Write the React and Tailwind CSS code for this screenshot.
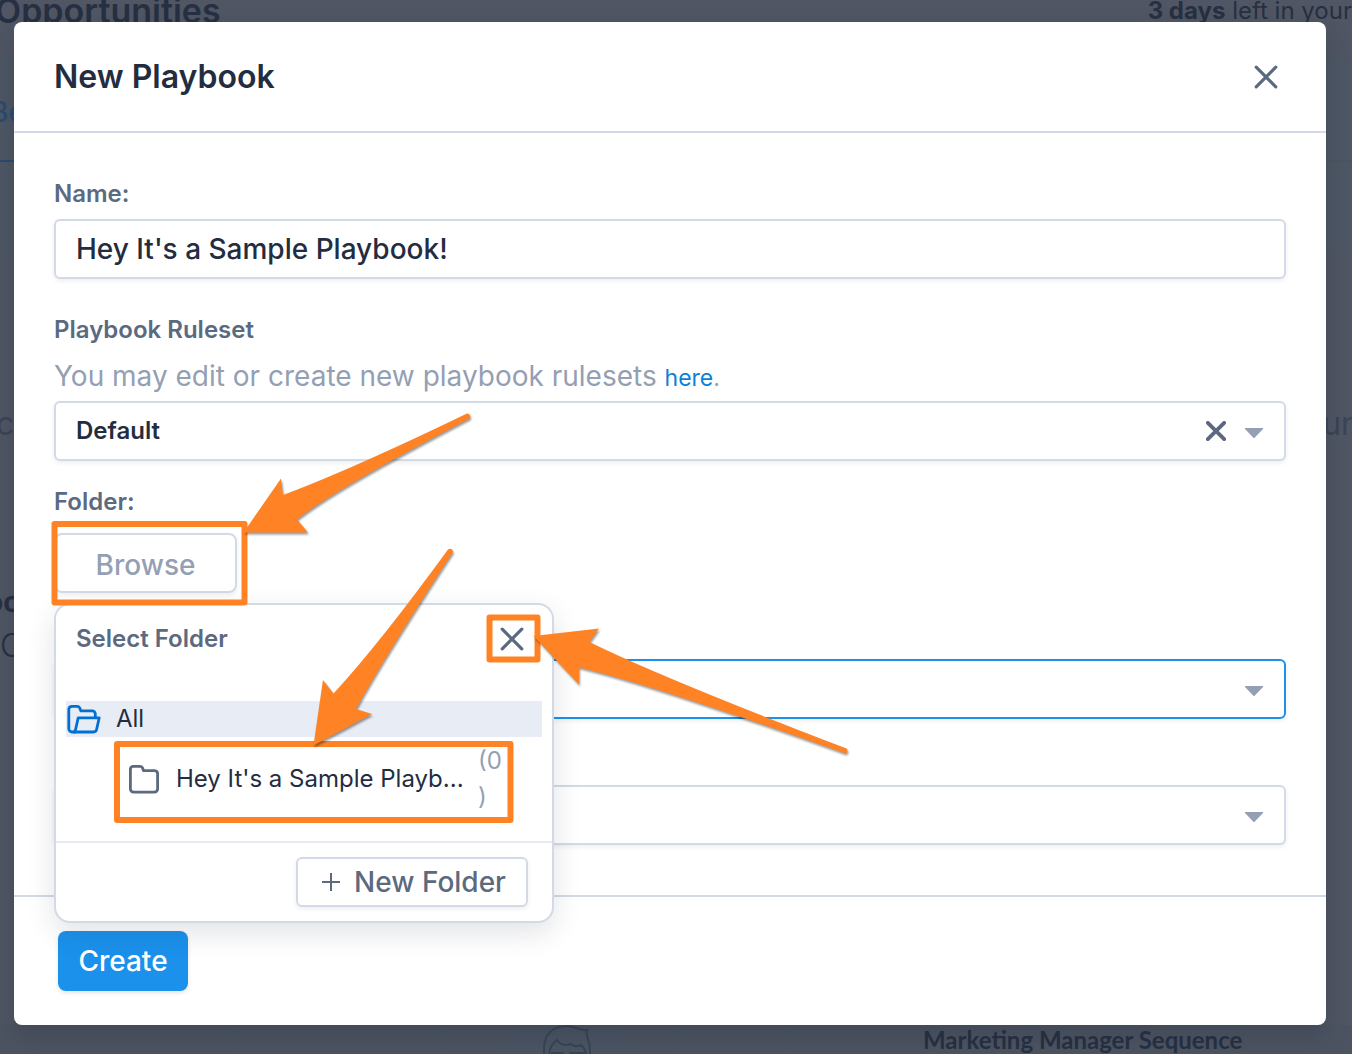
import React from "react";

const fieldBox = "h-[60px] w-full rounded-md border-2 bg-white shadow-[0_2px_4px_rgba(30,41,59,0.08)]";

function Cross({ className, width }) {
  return (
    <svg className={className} viewBox="0 0 24 24" fill="none" stroke="currentColor" strokeWidth={width} strokeLinecap="round" aria-hidden="true">
      <path d="M2.2 2.2 21.8 21.8M21.8 2.2 2.2 21.8" />
    </svg>
  );
}

function Caret() {
  return (
    <svg className="h-[10px] w-[18px] text-[#949fb3]" viewBox="0 0 18 10" fill="currentColor" aria-hidden="true">
      <path d="M0 0h18v1L9.6 9.7a1 1 0 0 1-1.2 0L0 1z" />
    </svg>
  );
}

function SelectBox({ id, label, options, onClear, focused }) {
  return (
    <div className="relative">
      <select
        id={id}
        aria-label={label}
        className={`${fieldBox} appearance-none px-5 text-2xl font-semibold text-[#232d3f] outline-none ${focused ? "border-[#1b91eb]" : "border-[#d3d9e6]"}`}
      >
        {options.map((o) => (
          <option key={o}>{o}</option>
        ))}
      </select>
      {onClear && (
        <button type="button" aria-label="Clear ruleset" className="absolute inset-y-0 right-[60px] flex items-center text-[#5b6a7f]">
          <Cross className="size-5" width={4.6} />
        </button>
      )}
      <span className="pointer-events-none absolute inset-y-0 right-[23px] flex items-center pt-1">
        <Caret />
      </span>
    </div>
  );
}

function FolderPopup() {
  return (
    <div className="absolute left-0 top-full z-10 mt-[10px] w-[500px] rounded-2xl border-2 border-[#d3d9e6] bg-white shadow-[0_10px_28px_rgba(30,41,59,0.13)]">
      <div className="flex h-[68px] items-center justify-between pl-5 pr-7">
        <h3 className="text-2xl font-semibold text-[#5b6a7f]">Select Folder</h3>
        <button type="button" aria-label="Close folder list" className="text-[#5b6a7f]">
          <Cross className="size-6" width={3.2} />
        </button>
      </div>
      <ul className="mt-7 px-[10px] text-2xl text-[#232d3f]">
        <li className="flex h-9 items-center bg-[#e8ecf5]">
          <svg className="w-[36px] text-[#0071d4]" viewBox="0 0 36 32" fill="none" stroke="currentColor" strokeWidth="2.8" strokeLinejoin="round" strokeLinecap="round" aria-hidden="true">
            <path d="M9 29H6a3.2 3.2 0 0 1-3.2-3.200V6.200A3.200 3.200 0 0 1 6 3.300h5.200c1.600 0 2.200.8 2.800 2.200L14.800 7.800h11.500a3 3 0 0 1 3 3v3" />
            <path d="M12.200 14.800h21L30.600 26.500A3.200 3.200 0 0 1 27.500 29H8.200c.8-.8 1.200-1.700 1.500-3z" />
          </svg>
          <span className="pl-[14px]">All</span>
        </li>
        <li className="flex items-center pb-[26px] pl-[62px] pt-[6px]">
          <svg className="w-8 shrink-0 text-[#5b6a7f]" viewBox="0 0 32 32" fill="none" stroke="currentColor" strokeWidth="2.8" strokeLinejoin="round" aria-hidden="true">
            <path d="M2.400 6A3 3 0 0 1 5.400 3.300h6.800c1.400 0 2 .5 2.400 1.700l.8 2.600h11.200A3.200 3.200 0 0 1 29.600 10.800v15.200A3.200 3.200 0 0 1 26.400 29.200h-20.800A3.200 3.200 0 0 1 2.400 26z" />
          </svg>
          <span className="pl-4">Hey It's a Sample Playb...</span>
          <span className="ml-auto mr-10 w-6 leading-9 text-[#949fb3]">(0 )</span>
        </li>
      </ul>
      <div className="flex justify-end border-t-2 border-[#e8ecf2] py-[14px] pr-6">
        <button type="button" className="flex h-[50px] w-[232px] items-center justify-center gap-[14px] rounded-md border-2 border-[#d3d9e6] pl-1 text-[28px] font-medium text-[#5b6a7f] shadow-[0_2px_4px_rgba(30,41,59,0.08)]">
          <svg className="size-[18px]" viewBox="0 0 18 18" stroke="currentColor" strokeWidth="2" aria-hidden="true">
            <path d="M9 0v18M0 9h18" />
          </svg>
          New Folder
        </button>
      </div>
    </div>
  );
}

function Annotations() {
  return (
    <svg className="pointer-events-none absolute -left-[14px] -top-[133px] z-20 h-[430px] w-[820px] max-w-none" viewBox="40 400 820 430" aria-hidden="true">
      <g fill="none" stroke="#ff8324" strokeWidth="6" strokeLinejoin="round">
        <path d="M54.500 524H244.500V602.500H54.500Z" />
        <path d="M117 744H510.500V820H117Z" />
        <path d="M489.500 617.500H537.500V659.500H489.500Z" />
      </g>
      <g fill="#ff8324" className="drop-shadow-[1px_2px_1px_rgba(0,0,0,0.4)]">
        <path d="M467 413.500Q350 470 283 495L281 478.500L243.500 532.500H308L297 519.500Q335 489 469.500 418.500A3 3 0 0 0 467 413.500Z" />
        <path d="M448 549.500Q380 643 333.500 693.500L323 680L313.500 745.500L372 714L356 709Q385 656 453 552A3 3 0 0 0 448 549.500Z" />
        <path d="M846.500 748.500Q660 677 589.500 642L599 628.500L533.500 636L579 684.500V667.500Q650 684 845.500 753.500A3 3 0 0 0 846.500 748.500Z" />
      </g>
    </svg>
  );
}

function PageBehind() {
  return (
    <div aria-hidden="true" className="absolute inset-0 flex flex-col overflow-hidden bg-[#505663] text-[#263042]">
      <div className="flex h-[62px] shrink-0 items-start justify-between border-b-2 border-[#4b5764]">
        <span className="-ml-[5px] text-[34px] font-semibold leading-[22px]">Opportunities</span>
        <span className="whitespace-nowrap text-2xl leading-[22px]">
          <b>3 days</b> left in your
        </span>
      </div>
      <div className="flex h-[100px] shrink-0 bg-[#4e5764]">
        <div className="w-1/2 border-b-2 border-[#2a4b70] pt-8">
          <span className="-ml-[10px] text-[28px] font-medium leading-9 text-[#2a4b70]">Be</span>
        </div>
        <div className="w-1/2 border-b-2 border-[#4b5461]" />
      </div>
      <div className="h-[90px] shrink-0 bg-[#4e5764]" />
      <div className="flex flex-1 justify-between pt-[154px] text-[32px] leading-9">
        <div>
          <div className="-ml-[4px] text-[#3b4555]">c</div>
          <div className="-ml-[14px] mt-[142px] text-[28px] font-bold">oo</div>
          <div className="mt-2 font-light">C</div>
        </div>
        <div className="-mr-[8px] text-[#3b4555]">un</div>
      </div>
      <div className="flex h-[29px] shrink-0 items-start bg-[#4d5461]">
        <div className="h-full w-[239px] border-r-2 border-[#4b5563]" />
        <div className="h-full w-[206px] border-r-2 border-[#4b5563]" />
        <div className="flex h-full w-[232px] justify-center border-r-2 border-[#4b5563]">
          <svg className="h-[29px] w-[150px]" viewBox="485 1025 150 29" fill="none" stroke="#384456" strokeWidth="2">
            <path d="M496 1054Q510 1026 545 1014H588Q625 1026 638 1054Z" fill="#4b5563" stroke="none" />
            <path d="M544 1054V1049C544 1034 553 1026 567 1026C575 1026 580 1031 587 1030C585 1036 590 1040 590 1050V1054M549 1054Q550 1045 557 1040Q562 1047 571 1044Q575 1048 581 1045Q586 1050 586 1054M551 1053H564M569 1053H585" />
          </svg>
        </div>
        <div className="h-full w-[113px] border-r-2 border-[#4b5563]" />
        <span className="whitespace-nowrap pl-[133px] font-['Lato'] text-2xl font-bold leading-[29px]">Marketing Manager Sequence</span>
      </div>
    </div>
  );
}

export default function App() {
  return (
    <div className="relative min-h-screen overflow-hidden pb-[29px] pl-[14px] pr-[26px] pt-[22px] font-['Inter',sans-serif]">
      <PageBehind />
      <section role="dialog" aria-labelledby="title" className="relative rounded-lg bg-white shadow-[0_12px_24px_rgba(30,41,59,0.25)]">
        <header className="flex h-[111px] items-center justify-between border-b-2 border-[#d3d9e6] pl-10 pr-12">
          <h2 id="title" className="text-[32px] font-semibold text-[#232d3f]">New Playbook</h2>
          <button type="button" aria-label="Close" className="text-[#5b6a7f]">
            <Cross className="size-6" width={3.2} />
          </button>
        </header>
        <form>
          <div className="px-10 pb-[50px] pt-10">
            <label htmlFor="name" className="block pb-1 text-2xl font-semibold leading-[42px] text-[#5b6a7f]">Name:</label>
            <input id="name" type="text" defaultValue="Hey It's a Sample Playbook!" className={`${fieldBox} border-[#d3d9e6] px-5 text-[28px] font-medium text-[#232d3f] outline-none`} />

            <label htmlFor="ruleset" className="mt-[30px] block text-2xl font-semibold leading-[42px] text-[#5b6a7f]">Playbook Ruleset</label>
            <p className="pb-[7px] pt-[7px] text-[28px] leading-9 text-[#949fb3]">
              You may edit or create new playbook rulesets{" "}
              <span className="text-[23px] leading-none">
                <a href="#rulesets" className="text-[#0b7fdb]">here</a>.
              </span>
            </p>
            <SelectBox id="ruleset" options={["Default"]} onClear />

            <div className="pt-5 text-2xl font-semibold leading-[42px] text-[#5b6a7f]">Folder:</div>
            <div className="relative mt-[10px]">
              <button type="button" className="block h-[60px] w-[183px] rounded-lg border-2 border-[#d3d9e6] pt-1 text-[28px] font-medium text-[#949fb3] shadow-[0_2px_4px_rgba(30,41,59,0.08)]">Browse</button>
              <FolderPopup />
              <Annotations />
            </div>

            <div className="flex flex-col gap-[66px] pt-[66px]">
              <SelectBox id="option-a" label="First option" options={[""]} focused />
              <SelectBox id="option-b" label="Second option" options={[""]} />
            </div>
          </div>
          <footer className="border-t-2 border-[#d3d9e6] px-11 py-[34px]">
            <button type="submit" className="block h-[60px] w-[130px] rounded-lg bg-[#1b91eb] text-[28px] font-medium text-white shadow-[0_2px_4px_rgba(30,41,59,0.12)]">Create</button>
          </footer>
        </form>
      </section>
    </div>
  );
}
